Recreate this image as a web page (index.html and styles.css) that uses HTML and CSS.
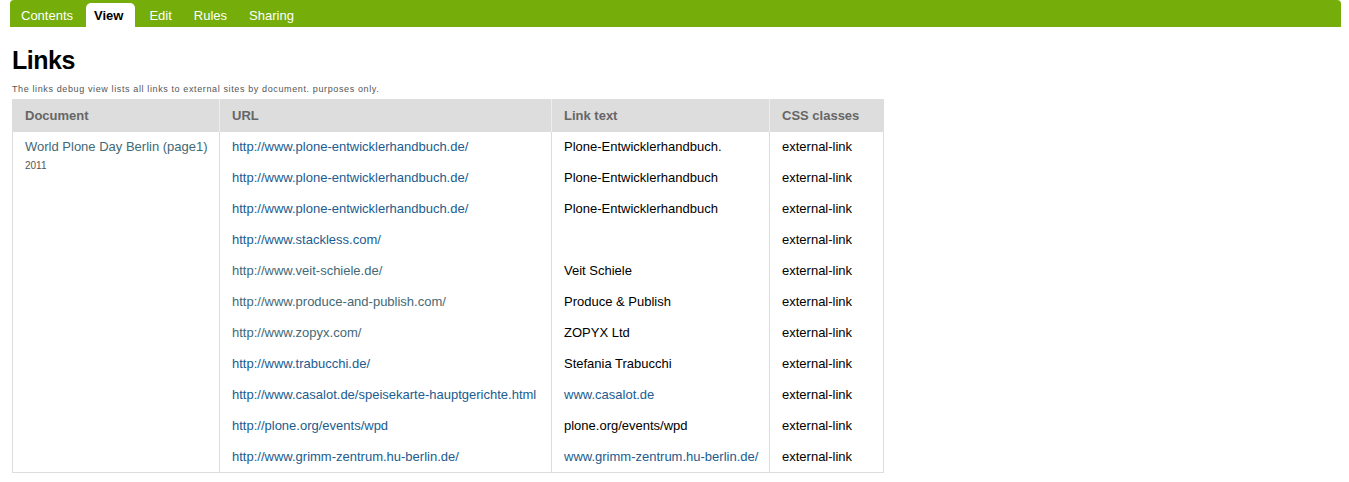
FILE: index.html
```html
<!DOCTYPE html>
<html lang="en">
<head>
<meta charset="utf-8">
<title>Links</title>
<link rel="stylesheet" href="styles.css">
</head>
<body>
<div class="page">
  <nav class="edit-bar">
    <a class="tab" href="#">Contents</a>
    <a class="tab selected" href="#">View</a>
    <a class="tab" href="#">Edit</a>
    <a class="tab" href="#">Rules</a>
    <a class="tab" href="#">Sharing</a>
  </nav>
  <main class="content">
    <h1 class="title">Links</h1>
    <p class="description">The links debug view lists all links to external sites by document. purposes only.</p>
    <table class="listing">
      <colgroup>
        <col class="c-doc">
        <col class="c-url">
        <col class="c-text">
        <col class="c-css">
      </colgroup>
      <thead>
        <tr><th>Document</th><th>URL</th><th>Link text</th><th>CSS classes</th></tr>
      </thead>
      <tbody>
        <tr>
          <td class="doc" rowspan="11"><a class="visited" href="#">World Plone Day Berlin (page1)</a><div class="discreet">2011</div></td>
          <td><a href="#">http://www.plone-entwicklerhandbuch.de/</a></td><td>Plone-Entwicklerhandbuch.</td><td>external-link</td>
        </tr>
        <tr><td><a href="#">http://www.plone-entwicklerhandbuch.de/</a></td><td>Plone-Entwicklerhandbuch</td><td>external-link</td></tr>
        <tr><td><a href="#">http://www.plone-entwicklerhandbuch.de/</a></td><td>Plone-Entwicklerhandbuch</td><td>external-link</td></tr>
        <tr><td><a href="#">http://www.stackless.com/</a></td><td></td><td>external-link</td></tr>
        <tr><td><a class="visited" href="#">http://www.veit-schiele.de/</a></td><td>Veit Schiele</td><td>external-link</td></tr>
        <tr><td><a class="visited" href="#">http://www.produce-and-publish.com/</a></td><td>Produce &amp; Publish</td><td>external-link</td></tr>
        <tr><td><a class="visited" href="#">http://www.zopyx.com/</a></td><td>ZOPYX Ltd</td><td>external-link</td></tr>
        <tr><td><a href="#">http://www.trabucchi.de/</a></td><td>Stefania Trabucchi</td><td>external-link</td></tr>
        <tr><td><a href="#">http://www.casalot.de/speisekarte-hauptgerichte.html</a></td><td><a href="#">www.casalot.de</a></td><td>external-link</td></tr>
        <tr><td><a href="#">http://plone.org/events/wpd</a></td><td>plone.org/events/wpd</td><td>external-link</td></tr>
        <tr><td><a href="#">http://www.grimm-zentrum.hu-berlin.de/</a></td><td><a href="#">www.grimm-zentrum.hu-berlin.de/</a></td><td>external-link</td></tr>
      </tbody>
    </table>
  </main>
</div>
</body>
</html>
```

FILE: styles.css
```css
html, body {
  margin: 0;
  padding: 0;
  background: #fff;
}

body {
  font-family: "Liberation Sans", Arial, sans-serif;
  font-size: 13px;
  color: #000;
}

.page {
  padding: 0 8px 0 10px;
}

.edit-bar {
  display: flex;
  align-items: flex-end;
  gap: 4px;
  height: 27px;
  padding-left: 2px;
  background: #75ad0a;
  border-radius: 4px 4px 0 0;
}

.tab {
  display: block;
  height: 24px;
  line-height: 25px;
  padding: 0 9px;
  color: #fff;
  text-decoration: none;
  font-size: 13px;
  border-radius: 5px 5px 0 0;
}

.tab.selected {
  background: #fff;
  color: #000;
  font-weight: bold;
  padding: 0 12px 0 8px;
  margin-right: 1px;
}

.content {
  padding-left: 2px;
}

.title {
  margin: 18px 0 0 0;
  font-size: 25px;
  line-height: 30px;
  font-weight: bold;
  letter-spacing: -0.5px;
  color: #000;
}

.description {
  margin: 8px 0 0 0;
  font-size: 9px;
  line-height: 12px;
  color: #555;
  letter-spacing: 0.62px;
}

.listing {
  margin-top: 4px;
  border-collapse: collapse;
  table-layout: fixed;
  width: 871px;
  border: 1px solid #ddd;
}

.c-doc { width: 207px; }
.c-url { width: 332px; }
.c-text { width: 218px; }
.c-css { width: 114px; }

.listing th {
  background: #ddd;
  color: #666;
  font-weight: bold;
  text-align: left;
  height: 32px;
  padding: 0 12px;
  border-left: 1px solid #eee;
  box-sizing: border-box;
  font-size: 13px;
}

.listing th:first-child {
  border-left: none;
}

.listing td {
  height: 31px;
  padding: 0 12px;
  vertical-align: middle;
  border-left: 1px solid #ddd;
  white-space: nowrap;
  box-sizing: border-box;
  line-height: 16px;
}

.listing td.doc {
  vertical-align: top;
  padding-top: 7px;
  border-left: none;
}

.listing a {
  color: #205c90;
  text-decoration: none;
}

.listing a.visited {
  color: #436976;
}

.discreet {
  margin-top: 5px;
  font-size: 10px;
  line-height: 12px;
  color: #555;
}
```
